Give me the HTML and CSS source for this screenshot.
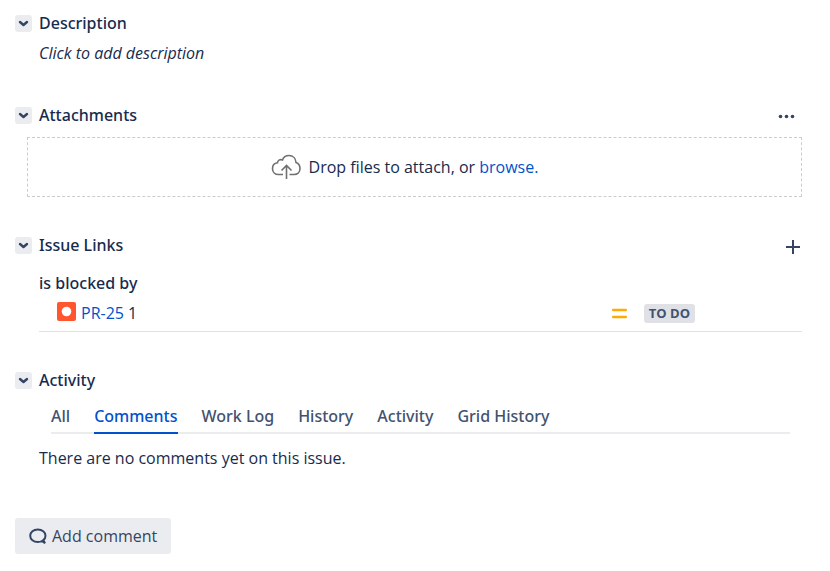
FILE: index.html
```html
<!DOCTYPE html>
<html lang="en">
<head>
    <meta charset="utf-8">
    <meta name="viewport" content="width=device-width, initial-scale=1">
    <title>Issue</title>
    <link rel="stylesheet" href="styles.css">
</head>
<body>
    <main class="issue">
        <section class="module">
            <div class="mod-header">
                <button type="button" class="toggle" aria-label="Toggle Description"><svg width="17" height="17" viewBox="0 0 17 17"><path d="M5 7l3.5 3L12 7"/></svg></button>
                <h2>Description</h2>
            </div>
            <p class="mod-content placeholder">Click to add description</p>
        </section>

        <section class="module">
            <div class="mod-header">
                <button type="button" class="toggle" aria-label="Toggle Attachments"><svg width="17" height="17" viewBox="0 0 17 17"><path d="M5 7l3.5 3L12 7"/></svg></button>
                <h2>Attachments</h2>
                <button type="button" class="action" aria-label="Attachment options">
                    <svg width="32" height="20" viewBox="0 0 32 20" fill="#344563"><circle cx="10.5" cy="11.5" r="1.8"/><circle cx="16.5" cy="11.5" r="1.8"/><circle cx="22.5" cy="11.5" r="1.8"/></svg>
                </button>
            </div>
            <div class="dropzone">
                <svg width="30" height="26" viewBox="0 0 30 26" fill="none" stroke="#707070" stroke-width="1.6"><path d="M12 20.5H7.5C4 20.5 1.5 18 1.5 14.7C1.5 11.5 3.5 9.2 6.500 8.8C6.5 6.5 9 5 11.5 6C12.5 3 15 1.5 18 1.5C22 1.5 24.8 4.5 25 8.5C27.5 9.5 29 11.8 29 14.500C29 18 26.5 20.5 23 20.5H18.5"/><path d="M15.5 25V12M10.5 16.5l5-5 5 5"/></svg>
                <span>Drop files to attach, or <a href="#">browse.</a></span>
            </div>
        </section>

        <section class="module">
            <div class="mod-header">
                <button type="button" class="toggle" aria-label="Toggle Issue Links"><svg width="17" height="17" viewBox="0 0 17 17"><path d="M5 7l3.5 3L12 7"/></svg></button>
                <h2>Issue Links</h2>
                <button type="button" class="action" aria-label="Add link">
                    <svg width="20" height="20" viewBox="0 0 20 20" stroke="#344563" stroke-width="2"><path d="M11 5v14M4 12h14"/></svg>
                </button>
            </div>
            <div class="mod-content links">
                <h3>is blocked by</h3>
                <div class="link-row">
                    <svg class="type" width="19" height="19" viewBox="0 0 19 19"><rect width="19" height="19" rx="2" fill="#ff5630"/><circle cx="9.5" cy="9.5" r="4.8" fill="#fff"/></svg>
                    <p><a href="#">PR-25</a> 1</p>
                    <svg width="15" height="11" viewBox="0 0 15 11" stroke="#ffab00" stroke-width="2.4" stroke-linecap="round"><path d="M1.2 2h12.6M1.2 9h12.6"/></svg>
                    <span class="status">TO DO</span>
                </div>
            </div>
        </section>

        <section class="module">
            <div class="mod-header">
                <button type="button" class="toggle" aria-label="Toggle Activity"><svg width="17" height="17" viewBox="0 0 17 17"><path d="M5 7l3.5 3L12 7"/></svg></button>
                <h2>Activity</h2>
            </div>
            <nav class="tabs">
                <a href="#">All</a>
                <a href="#" class="active">Comments</a>
                <a href="#">Work Log</a>
                <a href="#">History</a>
                <a href="#">Activity</a>
                <a href="#">Grid History</a>
            </nav>
            <p class="mod-content">There are no comments yet on this issue.</p>
        </section>

        <button type="button" class="comment">
            <svg width="18" height="16" viewBox="0 0 18 16" fill="none" stroke="#344563" stroke-width="2"><path d="M13 13C11.8 13.7 10.5 14 8.8 14C4.5 14 1.2 11.3 1.2 7.7S4.5 1.5 8.8 1.5S16.5 4.2 16.5 7.7C16.5 9.4 15.7 11 14.4 12.1L16 15.2Z"/></svg>
            Add comment
        </button>
    </main>
</body>
</html>
```
FILE: styles.css
```css
* { box-sizing: border-box; }
body { margin: 0; background: #fff; color: #172b4d; font: 16px/24px "Segoe UI", "Open Sans", sans-serif; }
h2, h3, p { margin: 0; font-size: 16px; line-height: 24px; }
h2, h3, .tabs a { font-family: "Segoe UI", "Noto Sans", sans-serif; font-weight: 500; }
a { color: #0052cc; text-decoration: none; }
button { font: inherit; border: 0; padding: 0; cursor: pointer; }
svg { display: block; flex: none; }

.issue { padding: 11px 28px 16px 15px; }
.module { margin-bottom: 36px; }
.mod-header { display: flex; align-items: center; gap: 7px; }
.mod-content { margin: 6px 0 0 24px; padding-bottom: 2px; }
.placeholder { font-style: italic; }

.toggle { width: 17px; height: 17px; border-radius: 3px; background: #ebecf0; }
.toggle path { fill: none; stroke: #344563; stroke-width: 2.4; stroke-linecap: round; stroke-linejoin: round; }
.action { margin-left: auto; background: none; }

.dropzone { display: flex; align-items: center; justify-content: center; gap: 8px; height: 60px; margin: 10px 0 0 12px; padding-right: 20px; border: 1px dashed #ccc; }

.links { margin-top: 14px; padding-bottom: 6px; border-bottom: 1px solid #dfe1e6; }
.link-row { display: flex; align-items: center; margin: 6px 107px 0 18px; }
.link-row p { flex: 1; margin-left: 5px; }
.type { margin-bottom: 4px; }
.status { margin-left: 17px; padding: 0 5px; border-radius: 3px; background: #dfe1e6; color: #42526e; font-size: 13px; font-weight: 700; line-height: 19px; }

.tabs { display: flex; gap: 24px; margin: 8px 12px 12px 36px; border-bottom: 2px solid #ebecf0; }
.tabs a { margin-bottom: -2px; padding: 4px 0; border-bottom: 2px solid transparent; color: #42526e; }
.tabs .active { border-color: #0052cc; color: #0052cc; }

.comment { display: flex; align-items: center; gap: 5px; height: 36px; margin-top: 46px; padding: 0 14px; border-radius: 3px; background: #ebecf0; color: #344563; }
```
